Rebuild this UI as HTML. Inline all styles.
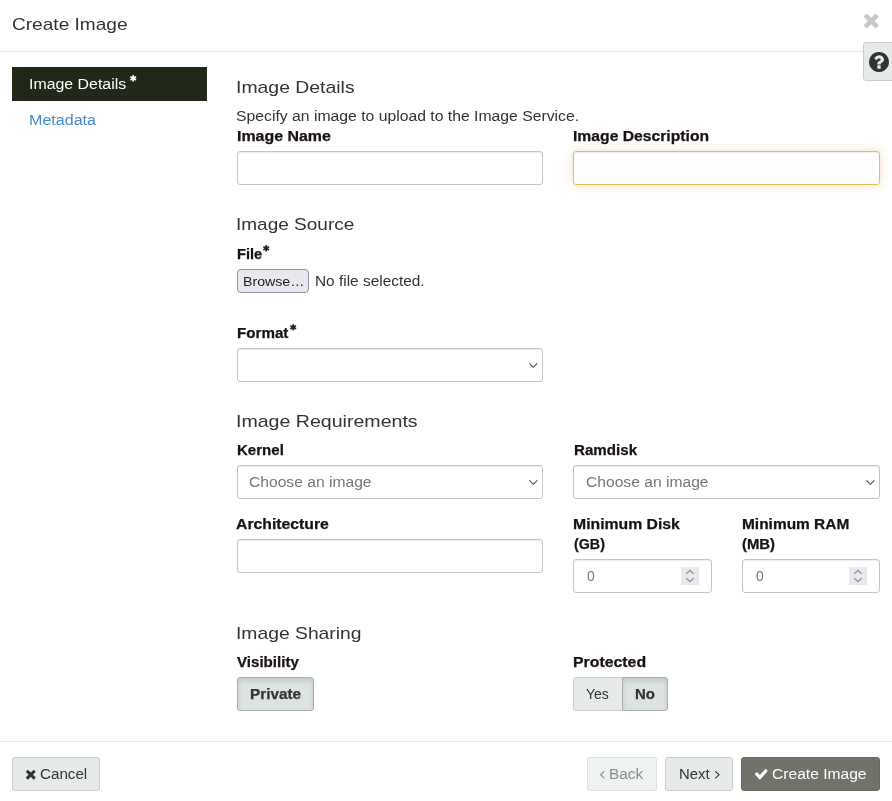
<!DOCTYPE html>
<html>
<head>
<meta charset="utf-8">
<title>Create Image</title>
<style>
html,body{margin:0;padding:0;}
body{width:892px;height:801px;position:relative;overflow:hidden;background:#fff;font-family:"Liberation Sans",sans-serif;}
.t{position:absolute;white-space:nowrap;line-height:1;transform-origin:0 0;display:block;}
.a{position:absolute;box-sizing:border-box;}
.hr{position:absolute;left:0;width:892px;height:1px;background:#e5e5e5;}
.inp{position:absolute;box-sizing:border-box;height:34px;background:#fff;border:1px solid #c4c4c4;border-radius:3px;box-shadow:inset 0 1px 1px rgba(0,0,0,.075);}
.btn{position:absolute;box-sizing:border-box;height:34px;background:#e6eaea;border:1px solid #ccc;border-radius:3px;}
.btn.act{background:#dde3e3;border-color:#adadad;box-shadow:inset 0 3px 5px rgba(0,0,0,.125);}
svg{position:absolute;overflow:visible;}
</style>
</head>
<body>
<div id="root" style="position:absolute;left:0;top:0;width:892px;height:801px;will-change:transform;">
<!-- header -->
<div class="hr" style="top:51px"></div>
<svg style="left:864.3px;top:14px" width="14.5" height="14.2" viewBox="110 -18 1188 1188" preserveAspectRatio="none"><path fill="#c9c9c9" d="M1298 214q0-40-28-68l-136-136q-28-28-68-28t-68 28l-294 294-294-294q-28-28-68-28t-68 28l-136 136q-28 28-28 68t28 68l294 294-294 294q-28 28-28 68t28 68l136 136q28 28 68 28t68-28l294-294 294 294q28 28 68 28t68-28l136-136q28-28 28-68t-28-68l-294-294 294-294q28-28 28-68z"/></svg>
<!-- help button -->
<div class="a" style="left:863px;top:42px;width:40px;height:39px;background:#e6eaea;border:1px solid #ccc;border-radius:3px 0 0 3px;"></div>
<svg style="left:869px;top:52px" width="20" height="20" viewBox="0 -128 1536 1536"><g transform="translate(0,1280) scale(1,-1)"><path fill="#333" d="M896 160v192q0 14 -9 23t-23 9h-192q-14 0 -23 -9t-9 -23v-192q0 -14 9 -23t23 -9h192q14 0 23 9t9 23zM1152 832q0 88 -55.500 163t-138.500 116t-170 41q-243 0 -371 -213q-15 -24 8 -42l132 -100q7 -6 19 -6q16 0 25 12q53 68 86 92q34 24 86 24q48 0 85.500 -26t37.500 -59q0 -38 -20 -61t-68 -45q-63 -28 -115.500 -86.500t-52.500 -125.500v-36q0 -14 9 -23t23 -9h192q14 0 23 9t9 23q0 19 21.500 49.500t54.500 49.500q32 18 49 28.500t46 35t44.500 48t28 60.500t12.500 81zM1536 640q0 -209 -103 -385.500t-279.500 -279.500t-385.500 -103t-385.500 103t-279.500 279.500t-103 385.500t103 385.500t279.500 279.500t385.500 103t385.500 -103t279.500 -279.500t103 -385.500z"/></g></svg>
<!-- sidebar -->
<div class="a" style="left:12px;top:67px;width:195px;height:34px;background:#212818;"></div>
<svg style="left:130px;top:75px" width="6.4" height="6.6" viewBox="110 -128 1444 1536" preserveAspectRatio="none"><path fill="#fff" d="M1482 486q46 -26 59.500 -77.500t-12.500 -97.500l-64 -110q-26 -46 -77.500 -59.500t-97.500 12.500l-266 153v-307q0 -52 -38 -90t-90 -38h-128q-52 0 -90 38t-38 90v307l-266 -153q-46 -26 -97.500 -12.500t-77.500 59.500l-64 110q-26 46 -12.500 97.500t59.500 77.500l266 154l-266 154q-46 26 -59.500 77.500t12.500 97.500l64 110q26 46 77.500 59.500t97.500 -12.500l266 -153v307q0 52 38 90t90 38h128q52 0 90 -38t38 -90v-307l266 153q46 26 97.500 12.500t77.500 -59.500l64 -110q26 -46 12.500 -97.500t-59.500 -77.500l-266 -154z"/></svg>
<!-- inputs -->
<div class="inp" style="left:237px;top:151px;width:306px;"></div>
<div class="inp" style="left:573px;top:151px;width:307px;border-color:#e3bd63;box-shadow:inset 0 1px 1px rgba(0,0,0,.075),0 0 8px rgba(227,189,99,.45);"></div>
<!-- file -->
<svg style="left:263px;top:245px" width="6.4" height="6.6" viewBox="110 -128 1444 1536" preserveAspectRatio="none"><path fill="#212818" d="M1482 486q46 -26 59.500 -77.500t-12.500 -97.500l-64 -110q-26 -46 -77.500 -59.500t-97.500 12.500l-266 153v-307q0 -52 -38 -90t-90 -38h-128q-52 0 -90 38t-38 90v307l-266 -153q-46 -26 -97.500 -12.500t-77.500 59.500l-64 110q-26 46 -12.500 97.500t59.500 77.500l266 154l-266 154q-46 26 -59.500 77.500t12.500 97.500l64 110q26 46 77.500 59.500t97.500 -12.500l266 -153v307q0 52 38 90t90 38h128q52 0 90 -38t38 -90v-307l266 153q46 26 97.500 12.500t77.500 -59.500l64 -110q26 -46 12.500 -97.500t-59.500 -77.500l-266 -154z"/></svg>
<div class="a" style="left:237px;top:269px;width:72px;height:24px;background:#e9e9ed;border:1px solid #8f8f9d;border-radius:4px;"></div>
<!-- format -->
<svg style="left:290px;top:324px" width="6.4" height="6.6" viewBox="110 -128 1444 1536" preserveAspectRatio="none"><path fill="#212818" d="M1482 486q46 -26 59.500 -77.500t-12.500 -97.500l-64 -110q-26 -46 -77.500 -59.500t-97.500 12.500l-266 153v-307q0 -52 -38 -90t-90 -38h-128q-52 0 -90 38t-38 90v307l-266 -153q-46 -26 -97.500 -12.500t-77.500 59.500l-64 110q-26 46 -12.500 97.500t59.500 77.500l266 154l-266 154q-46 26 -59.500 77.500t12.500 97.500l64 110q26 46 77.500 59.500t97.500 -12.500l266 -153v307q0 52 38 90t90 38h128q52 0 90 -38t38 -90v-307l266 153q46 26 97.500 12.500t77.500 -59.500l64 -110q26 -46 12.500 -97.500t-59.500 -77.500l-266 -154z"/></svg>
<div class="inp" style="left:237px;top:348px;width:306px;"></div>
<svg style="left:529px;top:362px" width="9" height="6" viewBox="0 0 9 6"><path d="M0.4 1.4 L4.3 5.3 L8.2 1.4" fill="none" stroke="#4a4a4a" stroke-width="1.15"/></svg>
<!-- requirements -->
<div class="inp" style="left:237px;top:465px;width:306px;"></div>
<svg style="left:529px;top:479px" width="9" height="6" viewBox="0 0 9 6"><path d="M0.4 1.4 L4.3 5.3 L8.2 1.4" fill="none" stroke="#4a4a4a" stroke-width="1.15"/></svg>
<div class="inp" style="left:573px;top:465px;width:307px;"></div>
<svg style="left:866px;top:479px" width="9" height="6" viewBox="0 0 9 6"><path d="M0.4 1.4 L4.3 5.3 L8.2 1.4" fill="none" stroke="#4a4a4a" stroke-width="1.15"/></svg>
<div class="inp" style="left:237px;top:539px;width:306px;"></div>
<div class="inp" style="left:573px;top:559px;width:139px;"></div>
<div class="a" style="left:681px;top:567px;width:18px;height:18px;background:#e9e9ed;"></div>
<svg style="left:681px;top:567px" width="18" height="18" viewBox="0 0 18 18"><path d="M5.3 6.9 L9 3.3 L12.7 6.9 M5.3 11.1 L9 14.7 L12.7 11.1" fill="none" stroke="#88889a" stroke-width="1.25"/></svg>
<div class="inp" style="left:742px;top:559px;width:138px;"></div>
<div class="a" style="left:849px;top:567px;width:18px;height:18px;background:#e9e9ed;"></div>
<svg style="left:849px;top:567px" width="18" height="18" viewBox="0 0 18 18"><path d="M5.3 6.9 L9 3.3 L12.7 6.9 M5.3 11.1 L9 14.7 L12.7 11.1" fill="none" stroke="#88889a" stroke-width="1.25"/></svg>
<!-- sharing -->
<div class="btn act" style="left:237px;top:677px;width:77px;"></div>
<div class="btn" style="left:573px;top:677px;width:50px;border-radius:3px 0 0 3px;"></div>
<div class="btn act" style="left:622px;top:677px;width:46px;border-radius:0 3px 3px 0;"></div>
<!-- footer -->
<div class="hr" style="top:741px"></div>
<div class="btn" style="left:12px;top:757px;width:88px;"></div>
<svg style="left:25.7px;top:769.6px" width="9.6" height="9.4" viewBox="110 -18 1188 1188" preserveAspectRatio="none"><path fill="#333" d="M1298 214q0-40-28-68l-136-136q-28-28-68-28t-68 28l-294 294-294-294q-28-28-68-28t-68 28l-136 136q-28 28-28 68t28 68l294 294-294 294q-28 28-28 68t28 68l136 136q28 28 68 28t68-28l294-294 294 294q28 28 68 28t68-28l136-136q28-28 28-68t-28-68l-294-294 294-294q28-28 28-68z"/></svg>
<div class="btn" style="left:587px;top:757px;width:70px;background:#eff2f2;border-color:#dedede;"></div>
<svg style="left:600.2px;top:770.5px" width="4.7" height="7.6" viewBox="45 77 582 998" preserveAspectRatio="none"><path fill="#8a8a8a" d="M627 992q0 -13 -10 -23l-393 -393l393 -393q10 -10 10 -23t-10 -23l-50 -50q-10 -10 -23 -10t-23 10l-466 466q-10 10 -10 23t10 23l466 466q10 10 23 10t23 -10l50 -50q10 -10 10 -23z"/></svg>
<div class="btn" style="left:665px;top:757px;width:68px;"></div>
<svg style="left:714.8px;top:770.5px" width="4.7" height="7.6" viewBox="13 77 582 998" preserveAspectRatio="none"><path fill="#333" d="M595 576q0 -13 -10 -23l-466 -466q-10 -10 -23 -10t-23 10l-50 50q-10 10 -10 23t10 23l393 393l-393 393q-10 10 -10 23t10 23l50 50q10 10 23 10t23 -10l466 -466q10 -10 10 -23z"/></svg>
<div class="btn" style="left:741px;top:757px;width:139px;background:#6f7369;border-color:#656a5e;"></div>
<svg style="left:755.3px;top:768.7px" width="12.6" height="10.4" viewBox="121 14 1550 1188" preserveAspectRatio="none"><g transform="translate(0,1216) scale(1,-1)"><path fill="#fff" d="M1671 970q0 -40 -28 -68l-724 -724l-136 -136q-28 -28 -68 -28t-68 28l-136 136l-362 362q-28 28 -28 68t28 68l136 136q28 28 68 28t68 -28l294 -295l656 657q28 28 68 28t68 -28l136 -136q28 -28 28 -68z"/></g></svg>
<span class="t" style="left:11.50px;top:16.25px;font-size:17px;font-weight:400;color:#333;transform:scaleX(1.1216)">Create Image</span>
<span class="t" style="left:28.68px;top:76.00px;font-size:15.5px;font-weight:400;color:#fff;transform:scaleX(1.0253)">Image Details</span>
<span class="t" style="left:28.67px;top:112.00px;font-size:15.5px;font-weight:400;color:#428bca;transform:scaleX(1.0362)">Metadata</span>
<span class="t" style="left:235.96px;top:79.25px;font-size:17px;font-weight:400;color:#333;transform:scaleX(1.1412)">Image Details</span>
<span class="t" style="left:236.40px;top:108.00px;font-size:15.5px;font-weight:400;color:#333;transform:scaleX(1.0156)">Specify an image to upload to the Image Service.</span>
<span class="t" style="left:236.53px;top:129.00px;font-size:14.5px;font-weight:700;-webkit-text-stroke-width:.25px;color:#1a1212;transform:scaleX(1.0986)">Image Name</span>
<span class="t" style="left:573.36px;top:129.00px;font-size:14.5px;font-weight:700;-webkit-text-stroke-width:.25px;color:#1a1212;transform:scaleX(1.0824)">Image Description</span>
<span class="t" style="left:235.98px;top:216.25px;font-size:17px;font-weight:400;color:#333;transform:scaleX(1.1178)">Image Source</span>
<span class="t" style="left:237.40px;top:247.00px;font-size:14.5px;font-weight:700;-webkit-text-stroke-width:.25px;color:#1a1212;transform:scaleX(1.0027)">File</span>
<span class="t" style="left:242.64px;top:275.08px;font-size:13.33px;font-weight:400;color:#222;transform:scaleX(1.0625)">Browse…</span>
<span class="t" style="left:315.21px;top:273.00px;font-size:15.5px;font-weight:400;color:#333;transform:scaleX(0.9938)">No file selected.</span>
<span class="t" style="left:237.40px;top:326.00px;font-size:14.5px;font-weight:700;-webkit-text-stroke-width:.25px;color:#1a1212;transform:scaleX(1.0454)">Format</span>
<span class="t" style="left:235.95px;top:413.25px;font-size:17px;font-weight:400;color:#333;transform:scaleX(1.1510)">Image Requirements</span>
<span class="t" style="left:237.40px;top:443.00px;font-size:14.5px;font-weight:700;-webkit-text-stroke-width:.25px;color:#1a1212;transform:scaleX(1.0373)">Kernel</span>
<span class="t" style="left:573.80px;top:443.00px;font-size:14.5px;font-weight:700;-webkit-text-stroke-width:.25px;color:#1a1212;transform:scaleX(1.0430)">Ramdisk</span>
<span class="t" style="left:249.28px;top:473.50px;font-size:15.5px;font-weight:400;color:#777;transform:scaleX(1.0084)">Choose an image</span>
<span class="t" style="left:586.28px;top:473.50px;font-size:15.5px;font-weight:400;color:#777;transform:scaleX(1.0084)">Choose an image</span>
<span class="t" style="left:236.43px;top:517.00px;font-size:14.5px;font-weight:700;-webkit-text-stroke-width:.25px;color:#1a1212;transform:scaleX(1.0865)">Architecture</span>
<span class="t" style="left:573.36px;top:517.00px;font-size:14.5px;font-weight:700;-webkit-text-stroke-width:.25px;color:#1a1212;transform:scaleX(1.0868)">Minimum Disk</span>
<span class="t" style="left:573.80px;top:537.00px;font-size:14.5px;font-weight:700;-webkit-text-stroke-width:.25px;color:#1a1212;transform:scaleX(0.9841)">(GB)</span>
<span class="t" style="left:742.30px;top:517.00px;font-size:14.5px;font-weight:700;-webkit-text-stroke-width:.25px;color:#1a1212;transform:scaleX(1.0655)">Minimum RAM</span>
<span class="t" style="left:742.30px;top:537.00px;font-size:14.5px;font-weight:700;-webkit-text-stroke-width:.25px;color:#1a1212;transform:scaleX(1.0254)">(MB)</span>
<span class="t" style="left:587.20px;top:568.00px;font-size:15.5px;font-weight:400;color:#7a7a7a;transform:scaleX(0.8978)">0</span>
<span class="t" style="left:755.70px;top:568.00px;font-size:15.5px;font-weight:400;color:#7a7a7a;transform:scaleX(0.8978)">0</span>
<span class="t" style="left:235.96px;top:625.25px;font-size:17px;font-weight:400;color:#333;transform:scaleX(1.1355)">Image Sharing</span>
<span class="t" style="left:237.41px;top:655.00px;font-size:14.5px;font-weight:700;-webkit-text-stroke-width:.25px;color:#1a1212;transform:scaleX(1.0423)">Visibility</span>
<span class="t" style="left:573.35px;top:655.00px;font-size:14.5px;font-weight:700;-webkit-text-stroke-width:.25px;color:#1a1212;transform:scaleX(1.0932)">Protected</span>
<span class="t" style="left:250.00px;top:687.00px;font-size:14.5px;font-weight:700;-webkit-text-stroke-width:.25px;color:#333;transform:scaleX(1.0559)">Private</span>
<span class="t" style="left:586.43px;top:685.50px;font-size:15.5px;font-weight:400;color:#333;transform:scaleX(0.9001)">Yes</span>
<span class="t" style="left:635.00px;top:686.50px;font-size:14.5px;font-weight:700;-webkit-text-stroke-width:.25px;color:#333;transform:scaleX(1.0271)">No</span>
<span class="t" style="left:39.63px;top:766.00px;font-size:15.5px;font-weight:400;color:#333;transform:scaleX(0.9779)">Cancel</span>
<span class="t" style="left:609.23px;top:766.00px;font-size:15.5px;font-weight:400;color:#8a8a8a;transform:scaleX(0.9881)">Back</span>
<span class="t" style="left:679.26px;top:766.00px;font-size:15.5px;font-weight:400;color:#333;transform:scaleX(0.9588)">Next</span>
<span class="t" style="left:772.49px;top:766.00px;font-size:15.5px;font-weight:400;color:#fff;transform:scaleX(1.0062)">Create Image</span>
</div>
</body>
</html>
